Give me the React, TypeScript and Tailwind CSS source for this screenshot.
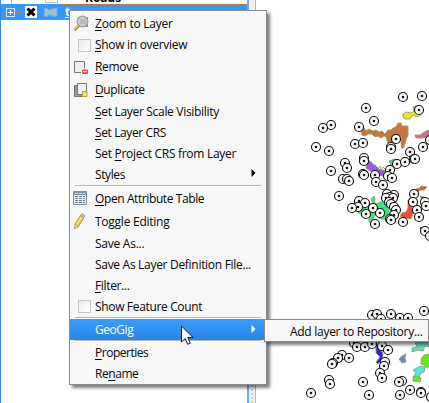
import React from "react";

type Item = {
  label: string;
  u?: number;
  h: string;
  icon?: React.ReactNode;
  track: string;
  arrow?: boolean;
};

const Box = () => (
  <span className="ml-[5px] block h-[13px] w-[13px] border border-[#c4c8ca] bg-gradient-to-br from-[#e9eaeb] to-white" />
);

const ZoomIcon = () => (
  <svg width="17" height="17" viewBox="0 0 17 17">
    <path d="M5 2h10v10H5z" fill="#8c8c8c" />
    <circle cx="9.500" cy="6.500" r="5.300" fill="#d3d5d6" fillOpacity=".9" stroke="#a0a0a0" strokeWidth="1.300" />
    <path d="M7 4h6v5H7z" fill="#b8babb" />
    <path d="M5.800 10.500 1.500 15" stroke="#a88a32" strokeWidth="2.800" />
    <path d="M5.500 10.300 1.500 14.400" stroke="#e8d688" strokeWidth="1.200" />
  </svg>
);
const RemoveIcon = () => (
  <svg width="16" height="16" viewBox="0 0 16 16">
    <path d="M1.500 2.500h10v11h-10z" fill="#efefec" stroke="#777" />
    <path d="M8 9.500h7v6H8z" fill="#f7f7f7" />
    <rect x="9" y="10.500" width="6" height="4.500" rx="1" fill="#e8484c" />
    <path d="M10 12.700h4" stroke="#fff" strokeWidth="1" />
  </svg>
);
const DuplicateIcon = () => (
  <svg width="16" height="16" viewBox="0 0 16 16">
    <path d="M1.500 3.500h10v11h-10z" fill="#999b98" stroke="#707070" />
    <path d="M4.500 1.500h9v11h-9z" fill="#f0f0ee" stroke="#777" />
    <path d="M9.500 9.500h4.500v5H9.500z" fill="#f3df70" stroke="#bd9b1e" />
  </svg>
);
const TableIcon = () => (
  <svg width="15" height="15" viewBox="0 0 15 15">
    <path d="M.5.5h13v13H.5z" fill="#e9eff2" stroke="#7e96a5" />
    <path d="M1 1h12v3H1z" fill="#7f9bad" />
    <path d="M2 2.500h3m1 0h3m1 0h2" stroke="#c5d6df" />
    <path d="M2 5.500h3m1 0h3m1 0h2M2 7.500h3m1 0h3m1 0h2M2 9.500h3m1 0h3m1 0h2M2 11.500h3m1 0h3m1 0h2" stroke="#6f8797" />
  </svg>
);
const PencilIcon = () => (
  <svg width="14" height="17" viewBox="0 0 14 17">
    <path d="m2 11 5.500-8.500 3.500 2-5.500 9-3.500 2z" fill="#e4d052" stroke="#9b8a3c" strokeWidth=".8" />
    <path d="m4 11 5-7.500" stroke="#f8ee9a" strokeWidth="1.200" />
    <path d="m7.500 2.500 1.300-1.800 3 1.600-.8 2.200z" fill="#c7c4ba" stroke="#888" strokeWidth=".6" />
    <path d="m2 11.500-1 4.500 4.200-2.500z" fill="#d8d8d8" stroke="#999" strokeWidth=".6" />
  </svg>
);

const items: (Item | "sep")[] = [
  { label: "Zoom to Layer", u: 0, h: "h-[23px]", icon: <ZoomIcon />, track: "tracking-[-0.23px]" },
  { label: "Show in overview", u: 0, h: "h-[20px]", icon: <Box />, track: "tracking-[-0.3px]" },
  { label: "Remove", u: 0, h: "h-[23px]", icon: <RemoveIcon />, track: "tracking-[-0.3px]" },
  { label: "Duplicate", u: 0, h: "h-[23px]", icon: <DuplicateIcon />, track: "tracking-[-0.36px]" },
  { label: "Set Layer Scale Visibility", u: 0, h: "h-[21px]", track: "tracking-[-0.31px]" },
  { label: "Set Layer CRS", u: 0, h: "h-[21px]", track: "tracking-[-0.38px]" },
  { label: "Set Project CRS from Layer", u: 4, h: "h-[21px]", track: "tracking-[-0.29px]" },
  { label: "Styles", h: "h-[21px]", track: "tracking-[-0.4px]", arrow: true },
  "sep",
  { label: "Open Attribute Table", u: 0, h: "h-[23px]", icon: <TableIcon />, track: "tracking-[-0.4px]" },
  { label: "Toggle Editing", h: "h-[23px]", icon: <PencilIcon />, track: "tracking-[-0.25px]" },
  { label: "Save As...", h: "h-[21px]", track: "tracking-[-0.25px]" },
  { label: "Save As Layer Definition File...", h: "h-[21px]", track: "tracking-[-0.3px]" },
  { label: "Filter...", u: 0, h: "h-[21px]", track: "tracking-[-0.35px]" },
  { label: "Show Feature Count", h: "h-[21px]", icon: <Box />, track: "tracking-[-0.34px]" },
  "sep",
  { label: "GeoGig", h: "h-[21px]", track: "tracking-[-0.45px]", arrow: true },
  "sep",
  { label: "Properties", u: 0, h: "h-[21px]", track: "tracking-[-0.48px]" },
  { label: "Rename", u: 2, h: "h-[21px]", track: "tracking-[-0.45px]" },
];

function Label({ text, u }: { text: string; u?: number }) {
  if (u === undefined) return <>{text}</>;
  return (
    <>
      {text.slice(0, u)}
      <span className="underline decoration-1 underline-offset-2">{text[u]}</span>
      {text.slice(u + 1)}
    </>
  );
}

const Row = ({ it }: { it: Item }) => {
  const hot = it.label === "GeoGig";
  return (
    <div
      className={`flex shrink-0 items-center ${it.h} ${it.track} ${
        hot ? "bg-gradient-to-b from-[#3d9cfc] to-[#2a85e0] pt-px text-white" : "text-[#050505]"
      }`}
    >
      <span className="flex w-[25px] shrink-0 pl-[3px]">{it.icon}</span>
      <span className="grow whitespace-pre">
        <Label text={it.label} u={it.u} />
      </span>
      {it.arrow && (
        <svg width="5" height="8" viewBox="0 0 5 8" className="mr-[10px] mb-[3px]">
          <path d="M.5 0v8L4.500 4z" fill="currentColor" />
        </svg>
      )}
    </div>
  );
};

const pins: [number, number][] = [
  [403, 97], [422, 96], [366, 108], [419, 110], [374, 121], [331, 125], [323, 128], [359, 127],
  [355, 144], [363, 143], [316, 147], [329, 151], [396, 139], [391, 147], [391, 149], [423, 147], [410, 152],
  [364, 158], [364, 161], [345, 163], [347, 168], [331, 171], [397, 164], [405, 162], [414, 159], [415, 159],
  [343, 179], [347, 179], [349, 181], [363, 174], [364, 175], [375, 175], [390, 170], [388, 176], [392, 178], [376, 182], [383, 185],
  [339, 196], [387, 194], [394, 195], [390, 197], [386, 198], [393, 198], [359, 201], [365, 203], [358, 207], [352, 208], [373, 208],
  [389, 202], [391, 204], [394, 207], [396, 210], [394, 215], [390, 219], [391, 220], [366, 214], [380, 213], [375, 224], [403, 222],
  [414, 194], [413, 202], [417, 210], [419, 217], [425, 202], [426, 206], [425, 231], [430, 236], [430, 140],
  [372, 315], [377, 314], [391, 314], [400, 318], [408, 318], [424, 311], [381, 319],
  [354, 343], [357, 347], [365, 347], [372, 344], [382, 346], [388, 350],
  [342, 355], [338, 358], [349, 358], [333, 363], [332, 364], [385, 362], [384, 366], [380, 373], [382, 378],
  [329, 380], [330, 384], [363, 382], [402, 381], [399, 382], [311, 393], [369, 395], [400, 395], [410, 390], [421, 392], [421, 393], [431, 397],
];

const MapCanvas = () => (
  <svg className="absolute left-[262px] top-0" width="167" height="403" viewBox="262 0 167 403">
    <g stroke="#92a35b" strokeWidth=".9" strokeLinejoin="round">
      <path d="M361 131 364 128 366 131 369 129 373 131 376 130 379 132 382 131 385 134 388 130 391 130 393 128 396 127 398 123 401 123 402 126 408 126 408 135 406 140 404 147 402 149 401 143 402 136 398 140 392 142 388 143 386 137 384 136 381 138 378 136 375 137 372 134 368 134 365 136 362 135z" fill="#c97340" />
      <path d="M403 114 406 112 411 113 414 111 413 107 416 106 422 109 421 115 417 117 413 115 410 119 405 119 403 117z" fill="#e6e532" />
      <path d="M415 135 420 135 423 133 426 131 430 130 430 136 423 138 416 138z" fill="#d9679c" />
      <path d="M367 160 370 161 373 164 376 166 380 170 384 170 386 173 384 176 378 175 375 172 370 171 366 168z" fill="#9c58eb" />
      <path d="M378 169 380 166 381 170 383 167 385 169" fill="none" />
      <path d="M389 161 395 159 397 162 392 167z" fill="#40c9ae" />
      <path d="M374 196 375 199 374 202 377 204 380 202 385 202 388 206 389 211 391 216 386 219 380 219 377 214 374 216 372 222 369 222 369 215 362 216 358 212 363 207 370 207 373 203 371 199z" fill="#35e586" />
      <path d="M408 200 412 196 412 208 414 211 411 219 404 218 400 216 402 213 406 212 408 208z" fill="#ee4745" />
      <path d="M416 189 420 188 421 186 427 187 424 190 420 190 418 192zM420 196 424 197 422 200z" fill="#ee4745" />
      <path d="M376 345 380 347 383 354 382 360 378 364 376 362 380 357 376 353z" fill="#3222d3" />
      <path d="M399 359 402 356 406 354 405 358 406 362 402 363z" fill="#7680ce" />
      <path d="M415 342 430 342 430 347 425 346 423 351 418 350 412 352 412 348 417 347z" fill="#59ded5" />
      <path d="M421 359 424 355 429 354 430 366 427 368 424 365 421 364z" fill="#6de32e" />
      <path d="M413 370 417 368 421 366 425 367 424 372 420 374 419 379 413 377 416 373z" fill="#55e5df" />
      <path d="M413 377 417 376 421 378 420 382 413 381z" fill="#6de32e" />
    </g>
    <path d="M420 227h4v3h-4z" fill="#3442d6" />
    {pins.map(([x, y], i) => (
      <g key={i}>
        <circle cx={x} cy={y} r="4.500" fill="#fff" stroke="#111" strokeWidth="1.150" />
        <circle cx={x} cy={y} r="1.300" fill="#111" />
      </g>
    ))}
  </svg>
);

const LayerTree = () => (
  <div className="flex h-[403px] w-[249px] flex-col border-l border-r-2 border-l-[#398bda] border-r-[#64adfa] bg-white">
    <div className="flex h-1 shrink-0 items-start pl-[10px]">
      <span className="h-full border-l border-dotted border-[#999]" />
      <span className="ml-[33px] h-[3px] w-[13px] border border-t-0 border-[#c0c0c0]" />
      <span className="-mt-[11px] ml-[27px] text-[12px] font-bold leading-[17px] text-black">Roads</span>
    </div>
    <div className="relative flex h-4 shrink-0 items-center bg-[#3399ff] pl-[5px]">
      <span className="flex h-[9px] w-[9px] items-center justify-center border border-[#d5e6f7] bg-[#3498fb]">
        <svg width="7" height="7"><path d="M1 3.500h5M3.500 1v5" stroke="#fff" /></svg>
      </span>
      <span className="ml-px w-[5px] border-t border-dotted border-[#c78c66]" />
      <span className="ml-1 flex h-[12px] w-[12px] items-center justify-center bg-white">
        <svg width="10" height="10"><path d="m1.500 1.500 7 7m0-7-7 7" stroke="#080808" strokeWidth="3" /></svg>
      </span>
      <svg className="ml-[6px]" width="16" height="11">
        <path d="M1 1q3 0 5 2l8-2v8q-4 1-6-1-3-1-4 2l-3-1Q2 5 1 1" fill="#a3bfd8" stroke="#86abd0" />
      </svg>
      <span className="ml-[3px] h-4 grow border border-dotted border-[#c27a3f] pl-0.5 text-[12px] font-bold leading-[14px] text-white underline">t</span>
    </div>
  </div>
);

export default function App() {
  return (
    <div className="relative flex h-[403px] w-[429px] overflow-hidden bg-white font-['Open_Sans','Noto_Sans',sans-serif] text-[12px] leading-4">
      <LayerTree />
      <div className="flex w-[7px] items-end justify-center border-r border-[#b5b5b5] bg-[#f0f0f0]">
        <span className="h-[30px] border-l-2 border-dotted border-[#c9c9c9]" />
      </div>
      <MapCanvas />
      <div className="absolute left-[69px] top-[10px] flex h-[375px] w-[198px] flex-col border border-[#8a8a8a] bg-[#f7f7f7] pt-px shadow-[3px_3px_3px_rgba(0,0,0,0.5)]">
        {items.map((it, i) =>
          it === "sep" ? (
            <div key={i} className="mx-[5px] h-[2px] shrink-0 border-b border-t border-b-white border-t-[#b5b5b5]" />
          ) : (
            <Row key={i} it={it} />
          ),
        )}
      </div>
      <div className="absolute left-[264px] top-[319px] flex h-[23px] w-[165px] items-center whitespace-pre border border-[#8a8a8a] bg-[#f7f7f7] pl-[25px] pt-0.5 tracking-[-0.28px] text-[#050505] shadow-[3px_3px_3px_rgba(0,0,0,0.5)]">
        Add layer to Repository...
      </div>
      <svg className="absolute left-[181px] top-[325px]" width="13" height="21" viewBox="0 0 13 21">
        <path d="M.5 1v16l3.700-3.500 2.500 5.800 2.600-1.100-2.500-5.700H12z" fill="#fff" stroke="#111a36" />
      </svg>
    </div>
  );
}
